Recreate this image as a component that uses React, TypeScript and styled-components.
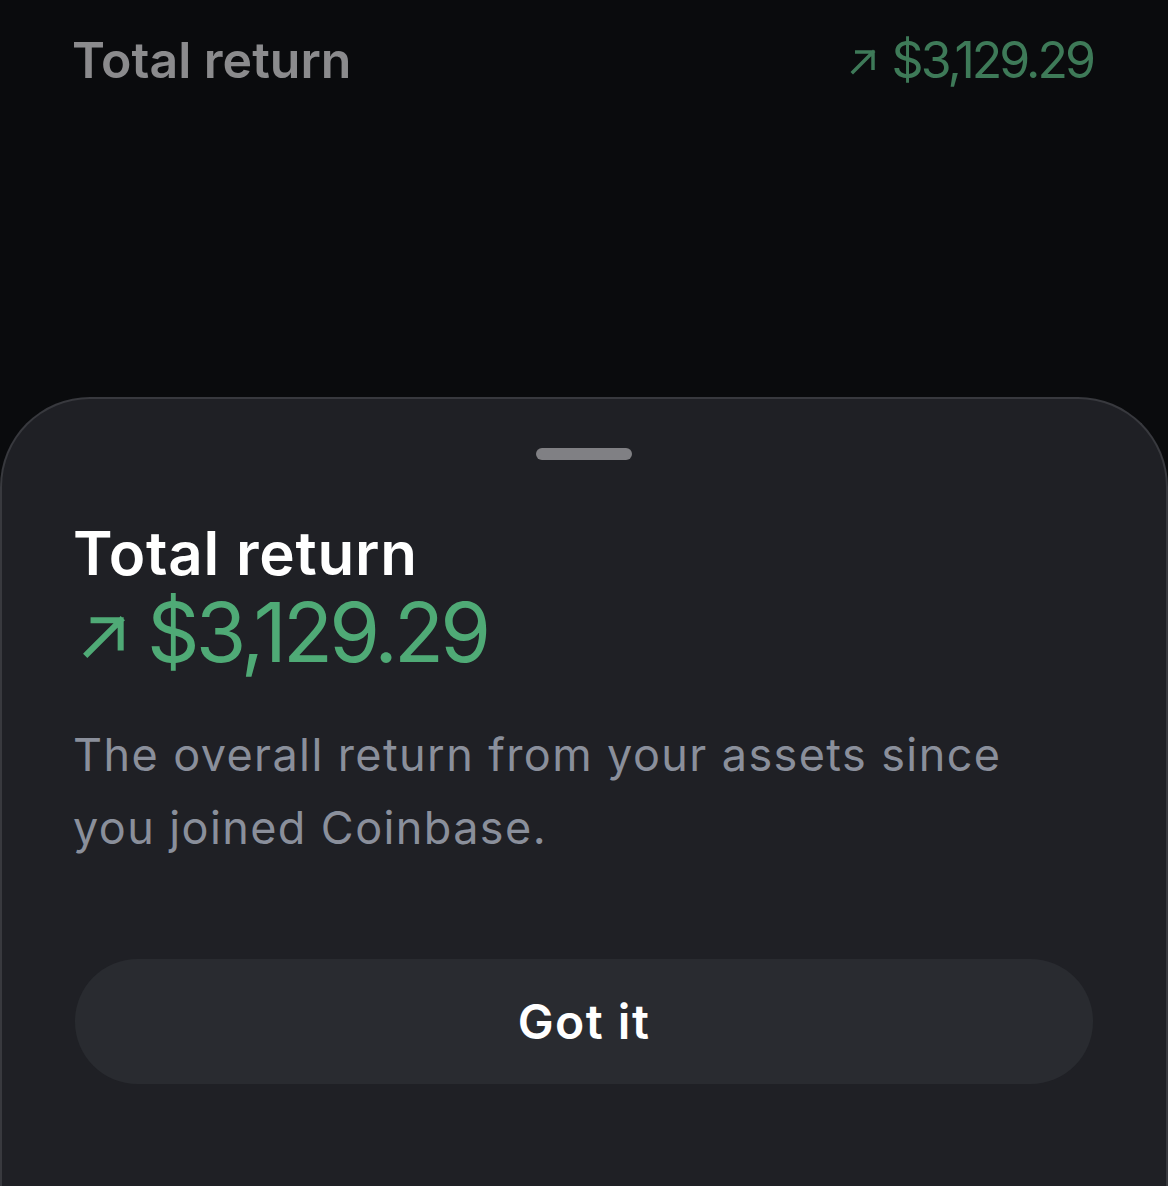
import React from 'react';
import styled, { createGlobalStyle } from 'styled-components';

const GlobalStyle = createGlobalStyle`
  html, body {
    margin: 0;
    padding: 0;
    background: #0a0b0d;
  }
  body {
    font-family: Inter, 'Noto Sans', 'Liberation Sans', sans-serif;
  }
`;

const ArrowUpRight = ({ size, stroke }: { size: number; stroke: number }) => (
  <svg width={size} height={size} viewBox="0 0 24 24" fill="none">
    <path
      d="M4 20 L20 4 M7 4 H20 V17"
      stroke="currentColor"
      strokeWidth={stroke}
      strokeLinecap="square"
    />
  </svg>
);

const App = () => {
  return (
    <>
      <GlobalStyle />
      <Page>
        <Header>
          <HeaderLabel>Total return</HeaderLabel>
          <HeaderValue>
            <ArrowUpRight size={30} stroke={2.8} />
            $3,129.29
          </HeaderValue>
        </Header>
        <Sheet>
          <Handle />
          <Title>Total return</Title>
          <Amount>
            <ArrowUpRight size={50} stroke={2.9} />
            $3,129.29
          </Amount>
          <Description>
            The overall return from your assets since
            <br />
            you joined Coinbase.
          </Description>
          <Button>Got it</Button>
        </Sheet>
      </Page>
    </>
  );
};
export default App;

const Page = styled.div`
  width: 1168px;
  height: 1186px;
  display: flex;
  flex-direction: column;
  overflow: hidden;
  background: #0a0b0d;
`;

const Header = styled.div`
  height: 397px;
  padding: 28px 75px 0 72px;
  box-sizing: border-box;
  display: flex;
  justify-content: space-between;
  align-items: flex-start;
`;

const HeaderLabel = styled.div`
  color: #8b8b8d;
  font-size: 50px;
  font-weight: 600;
  letter-spacing: 0px;
  line-height: 64px;
`;

const HeaderValue = styled.div`
  display: flex;
  align-items: center;
  gap: 14px;
  color: #3e7a58;
  font-size: 50px;
  font-weight: 400;
  letter-spacing: -3px;
  line-height: 64px;
  svg {
    margin-top: 4px;
  }
`;

const Sheet = styled.div`
  flex: 1;
  display: flex;
  flex-direction: column;
  padding: 0 71px;
  background: #1f2025;
  border: 2px solid #38393e;
  border-bottom: none;
  border-radius: 90px 90px 0 0;
`;

const Handle = styled.div`
  align-self: center;
  width: 96px;
  height: 12px;
  margin-top: 49px;
  border-radius: 6px;
  background: #808084;
`;

const Title = styled.div`
  margin-top: 58px;
  color: #ffffff;
  font-size: 60px;
  font-weight: 600;
  letter-spacing: 0.8px;
  line-height: 70px;
`;

const Amount = styled.div`
  display: flex;
  align-items: center;
  gap: 18px;
  color: #4faa76;
  font-size: 82px;
  font-weight: 400;
  letter-spacing: -3.8px;
  line-height: 90px;
  svg {
    margin-top: 8px;
    margin-left: 6px;
  }
`;

const Description = styled.div`
  margin-top: 40px;
  color: #8a8f9b;
  font-size: 45px;
  font-weight: 400;
  line-height: 73px;
  letter-spacing: 1.4px;
`;

const Button = styled.button`
  margin: 95px 2px 0;
  height: 125px;
  border: none;
  border-radius: 63px;
  background: #292b30;
  color: #ffffff;
  font-family: inherit;
  font-size: 48px;
  font-weight: 600;
  letter-spacing: 1.5px;
`;
